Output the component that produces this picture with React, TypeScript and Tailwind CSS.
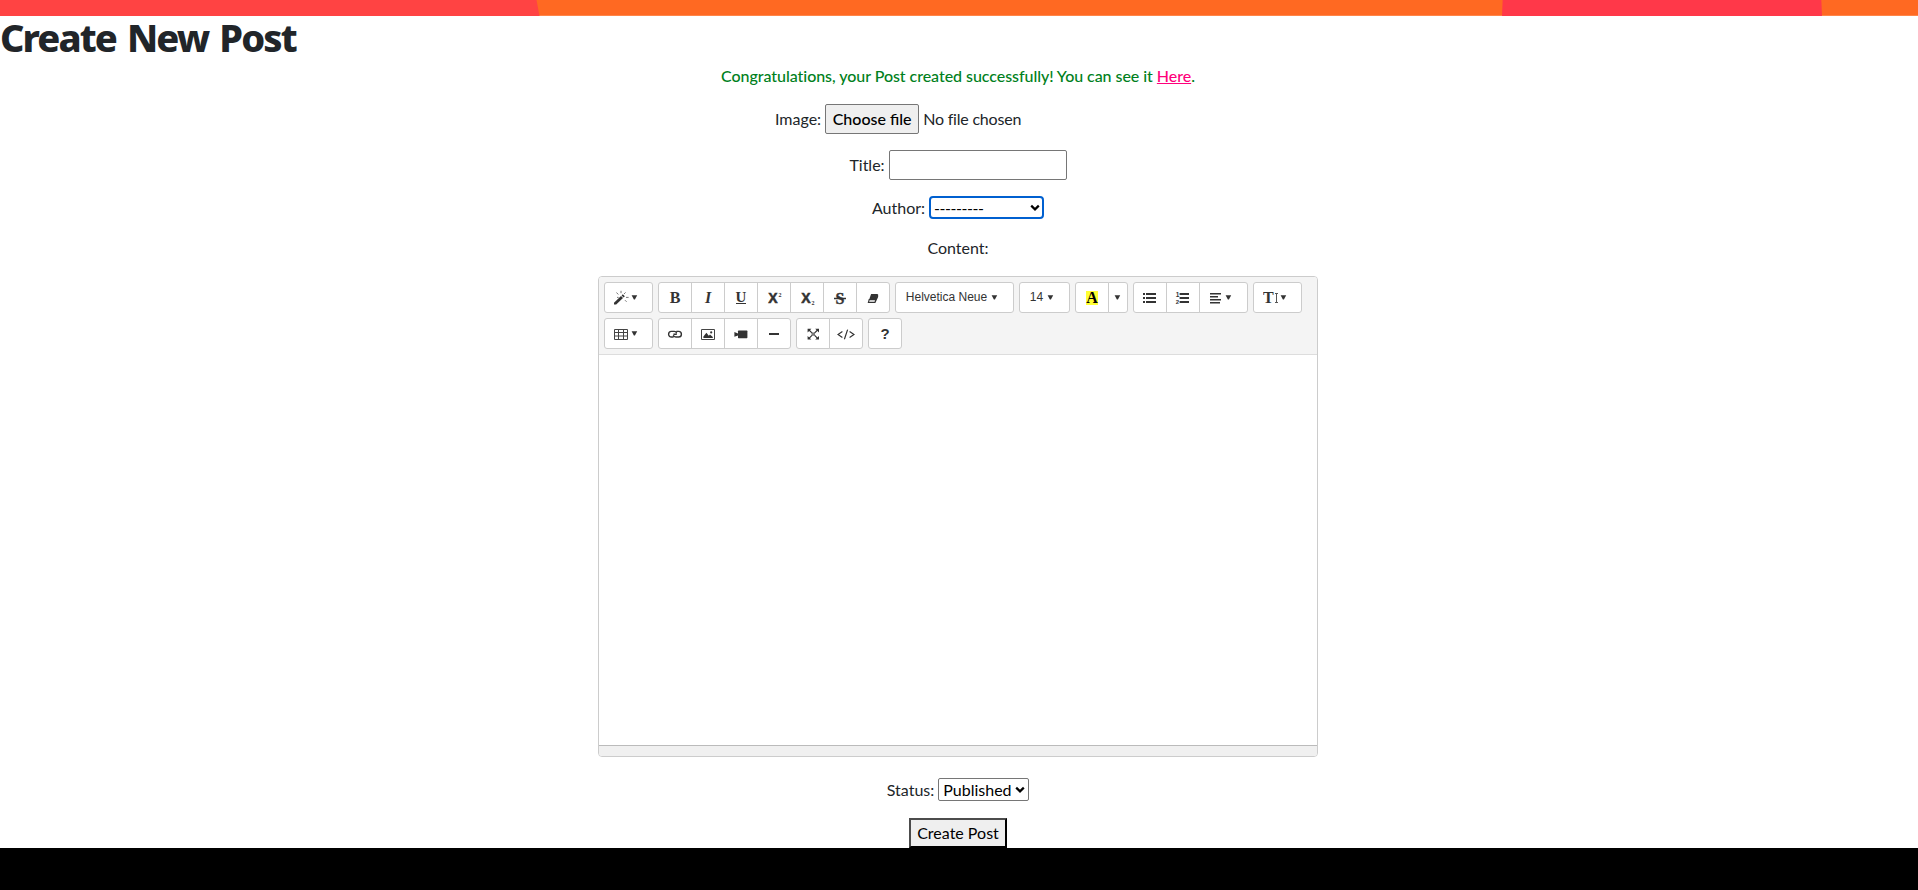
import type { ReactNode } from "react";

function Caret() {
  return (
    <svg width="7" height="5" viewBox="0 0 7 5" className="shrink-0" fill="#333">
      <path d="M0.6 0.3h5.6L3.9 4.4h-1z" />
    </svg>
  );
}

function Chevron() {
  return (
    <svg width="10" height="8" viewBox="0 0 10 8" fill="none" stroke="#000" strokeWidth="2.2" className="pointer-events-none shrink-0">
      <path d="M1.2 1.6L5 5.4l3.8-3.8" />
    </svg>
  );
}

function Group({ children }: { children: ReactNode }) {
  return <div className="flex -space-x-px">{children}</div>;
}

function Btn({ children, className = "w-[34px]", label }: { children: ReactNode; className?: string; label: string }) {
  return (
    <button
      type="button"
      aria-label={label}
      className={`flex h-[31px] items-center justify-center border border-[#ccc] bg-white text-[#333] first:rounded-l-[3px] last:rounded-r-[3px] ${className}`}
    >
      {children}
    </button>
  );
}

function Icon({ children }: { children: ReactNode }) {
  return (
    <svg width="16" height="16" viewBox="0 0 16 16" fill="#333" className="shrink-0">
      {children}
    </svg>
  );
}

const serif = "font-['Liberation_Serif',serif] font-bold";

function Toolbar() {
  return (
    <div className="flex h-[78px] flex-col gap-[5px] border-b border-[#ddd] bg-[#f4f4f4] pt-[5px] pl-[5px] font-['Liberation_Sans',sans-serif]">
      <div className="flex gap-[5px]">
        <Group>
          <Btn label="Style" className="w-[49px] gap-[2px] pr-[6px]">
            <Icon>
              <path d="M1 12.8L8 6l2 2L3.2 14.6H1z" />
              <path d="M8.6 5.4l1.2-1.2 2 2-1.2 1.2z" />
              <path d="M3.4 2.6l2 1.8M8 .8v2.4M12.6 2.4L11 4M13 7.4h2.6M12 10.2l1.6 1.6M4 7.4h1.6" fill="none" stroke="#777" />
            </Icon>
            <Caret />
          </Btn>
        </Group>
        <Group>
          <Btn label="Bold"><span className={`${serif} text-[16px] leading-4`}>B</span></Btn>
          <Btn label="Italic"><span className={`${serif} text-[16px] italic leading-4`}>I</span></Btn>
          <Btn label="Underline">
            <span className={`${serif} border-b border-[#333] text-[15px] leading-[12px]`}>U</span>
          </Btn>
          <Btn label="Superscript">
            <Icon>
              <text x="2.2" y="13.4" fontSize="14" fontWeight="700" fontFamily="Liberation Sans" stroke="#333" strokeWidth="0.5">X</text>
              <text x="12.6" y="6.6" fontSize="6" fontWeight="700" fontFamily="Liberation Serif">2</text>
            </Icon>
          </Btn>
          <Btn label="Subscript">
            <Icon>
              <text x="2.2" y="13.4" fontSize="14" fontWeight="700" fontFamily="Liberation Sans" stroke="#333" strokeWidth="0.5">X</text>
              <text x="12.6" y="15.4" fontSize="6" fontWeight="700" fontFamily="Liberation Serif">2</text>
            </Icon>
          </Btn>
          <Btn label="Strikethrough">
            <Icon>
              <text x="8" y="13.5" textAnchor="middle" fontSize="16" fontWeight="700" fontFamily="Liberation Serif" stroke="#333" strokeWidth="0.4">S</text>
              <path d="M2 7.8h12v1.4H2z" />
            </Icon>
          </Btn>
          <Btn label="Remove font style">
            <Icon>
              <path d="M6.1 4h6.8l-1.8 5.6H4.2z" />
              <path d="M4.2 9.6h6.5l-.7 2.8H3.4zM10.8 9.6l1.8-5v2.2l-2.5 5.4" fill="#fff" stroke="#333" strokeWidth="1.1" />
            </Icon>
          </Btn>
        </Group>
        <Group>
          <Btn label="Font family" className="w-[119px] gap-[4px] pr-[5px]">
            <span className="pb-px text-[12px] leading-4">Helvetica Neue</span>
            <Caret />
          </Btn>
        </Group>
        <Group>
          <Btn label="Font size" className="w-[51px] gap-[4px] pr-[5px]">
            <span className="pb-px text-[12px] leading-4">14</span>
            <Caret />
          </Btn>
        </Group>
        <Group>
          <Btn label="Recent color">
            <span className="flex h-[14px] w-[12px] items-center justify-center bg-[#ffff33]">
              <span className={`${serif} text-[16px] leading-[14px] text-black`}>A</span>
            </span>
          </Btn>
          <Btn label="More color" className="w-5 pr-px"><Caret /></Btn>
        </Group>
        <Group>
          <Btn label="Unordered list">
            <Icon>
              <path d="M1 3h2v2H1zM1 7h2v2H1zM1 11h2v2H1zM4 3h10v2H4zM4 7h10v2H4zM4 11h10v2H4z" />
            </Icon>
          </Btn>
          <Btn label="Ordered list">
            <Icon>
              <path d="M4.6 3H14v2H4.6zM4.6 7H14v2H4.6zM4.6 11H14v2H4.6z" />
              <text x="0.8" y="7" fontSize="6.5" fontWeight="700" fontFamily="Liberation Sans">1</text>
              <text x="0.8" y="13.8" fontSize="6" fontWeight="700" fontFamily="Liberation Sans">2</text>
            </Icon>
          </Btn>
          <Btn label="Paragraph" className="w-[49px] gap-px pr-[8px]">
            <Icon>
              <path d="M2 3h11v1.4H2zM2 6h8v1.4H2zM2 9h11v1.4H2zM2 12h10v1.4H2z" />
            </Icon>
            <Caret />
          </Btn>
        </Group>
        <Group>
          <Btn label="Line height" className="w-[49px] gap-px pr-[6px]">
            <Icon>
              <text x="0" y="13.3" fontSize="16" fontWeight="700" fontFamily="Liberation Serif">T</text>
              <path d="M13.5 3.5v9.4M12 3.5h3M12 12.5h3" fill="none" stroke="#555" />
            </Icon>
            <Caret />
          </Btn>
        </Group>
      </div>
      <div className="flex gap-[5px]">
        <Group>
          <Btn label="Table" className="w-[49px] gap-[2px] pr-[6px]">
            <Icon>
              <path d="M1.5 3.5h13v10h-13zM1.5 6.5h13M1.5 10h13M5.5 3.5v10M10.5 3.5v10" fill="none" stroke="#444" />
            </Icon>
            <Caret />
          </Btn>
        </Group>
        <Group>
          <Btn label="Link">
            <Icon>
              <path d="M6.6 11H4.4a2.8 2.8 0 0 1 0-5.6h2.8c1.4 0 2.2.8 2.5 1.9M9.4 5.4h2.2a2.8 2.8 0 0 1 0 5.6H8.8c-1.4 0-2.2-.8-2.5-1.9M6.4 8.2h3.4" fill="none" stroke="#333" strokeWidth="1.4" />
            </Icon>
          </Btn>
          <Btn label="Picture">
            <Icon>
              <path d="M1.5 3.5h13v10h-13z" fill="none" stroke="#444" />
              <path d="M3.4 12v-1.6l3-3.6 2.4 3 1.2-1.2 2.8 2.4v1z" />
              <circle cx="11.2" cy="6.4" r="1.1" />
            </Icon>
          </Btn>
          <Btn label="Video">
            <Icon>
              <rect x="5" y="4.6" width="9.4" height="7.6" rx="0.6" />
              <path d="M1.4 6L5 7.4v2L1.4 10.8z" />
            </Icon>
          </Btn>
          <Btn label="Horizontal rule">
            <Icon><path d="M3 7h10v2H3z" /></Icon>
          </Btn>
        </Group>
        <Group>
          <Btn label="Full screen">
            <Icon>
              <path d="M4 4l3.2 3.2M12.6 4L9.4 7.2M4 12.4l3.2-3.2M12.6 12.4L9.4 9.2" fill="none" stroke="#333" strokeWidth="1.2" />
              <path d="M2.6 2.8h3.8L2.6 6.4zM14 2.8h-3.8L14 6.4zM2.6 13.6h3.8L2.6 10zM14 13.6h-3.8L14 10z" />
              <path d="M6.6 6.6h3.4v3.2H6.6z" fill="#777" />
            </Icon>
          </Btn>
          <Btn label="Code view">
            <svg width="18" height="16" viewBox="0 0 18 16" fill="none" stroke="#333" strokeWidth="1.2">
              <path d="M5.4 5.6L1 8.5l4.4 2.9M12.6 5.6L17 8.5l-4.4 2.9M10.6 3.6L7.4 13.2" />
            </svg>
          </Btn>
        </Group>
        <Group>
          <Btn label="Help"><span className="text-[15px] font-bold leading-4">?</span></Btn>
        </Group>
      </div>
    </div>
  );
}

export default function App() {
  return (
    <div className="flex h-[890px] w-full flex-col overflow-hidden bg-white font-['Lato',sans-serif] text-[16px] leading-6 text-[#212529]">
      <svg width="1918" height="16" viewBox="0 0 1918 16" className="block shrink-0">
        <path d="M0 0h1918v16H0z" fill="#ff6922" />
        <path d="M0 15h1918v1H0z" fill="#ff8548" />
        <path d="M0 0h536.5l3 16H0z" fill="#ff4343" />
        <path d="M1502.7 0H1821.3l.7 16h-320z" fill="#ff3849" />
      </svg>
      <h1 className="flex h-[48px] shrink-0 items-center pb-[7px] font-['Noto_Sans',sans-serif] text-[38px] font-extrabold leading-[40px] tracking-[-1.9px] [word-spacing:3px]">
        Create New Post
      </h1>
      <p className="h-6 shrink-0 pr-[2px] text-center tracking-[-0.05px] font-medium text-[#008020]">
        Congratulations, your Post created successfully! You can see it{" "}
        <a href="#" className="text-[#ff007b] underline">Here</a>.
      </p>
      <form className="flex flex-col items-center pr-[2px]">
        <div className="mt-4 flex h-[30px] w-[366px] items-center gap-1">
          <span>Image:</span>
          <button type="button" className="h-[30px] w-[94px] rounded-[2px] border border-[#767676] bg-[#efefef] font-medium text-black">
            Choose file
          </button>
          <span className="tracking-[-0.2px]">No file chosen</span>
        </div>
        <label className="mt-4 flex h-[30px] items-center gap-1">
          Title:
          <input type="text" className="h-[30px] w-[178px] rounded-[2px] border border-[#767676] bg-white px-1" />
        </label>
        <label className="mt-4 flex h-[23px] items-center gap-1">
          <span>Author:</span>
          <span className="flex h-[23px] w-[115px] items-center justify-between rounded-[4px] border-2 border-[#0060d0] bg-white pr-[2px] pl-[3px]">
            <span className="tracking-[-0.45px] text-black">---------</span>
            <Chevron />
          </span>
        </label>
        <div className="mt-[17px] h-6">Content:</div>
        <div className="mt-4 flex h-[481px] w-[720px] flex-col overflow-hidden rounded-[4px] border border-[#ccc] bg-white">
          <Toolbar />
          <div className="flex-1" />
          <div className="h-[11px] border-t border-[#bbb] bg-[#f0f0f0]" />
        </div>
        <label className="mt-[21px] flex h-[23px] items-center gap-1">
          <span>Status:</span>
          <span className="flex h-[23px] w-[91px] items-center justify-between rounded-[2px] border border-[#767676] bg-white pr-[3px] pl-[4px]">
            <span className="text-black">Published</span>
            <Chevron />
          </span>
        </label>
        <button type="button" className="mt-[17px] h-[30px] w-[98px] border-2 border-t-[#4c4c4c] border-r-black border-b-black border-l-[#4c4c4c] bg-[#efefef] text-black">
          Create Post
        </button>
      </form>
      <footer className="flex-1 bg-black" />
    </div>
  );
}
